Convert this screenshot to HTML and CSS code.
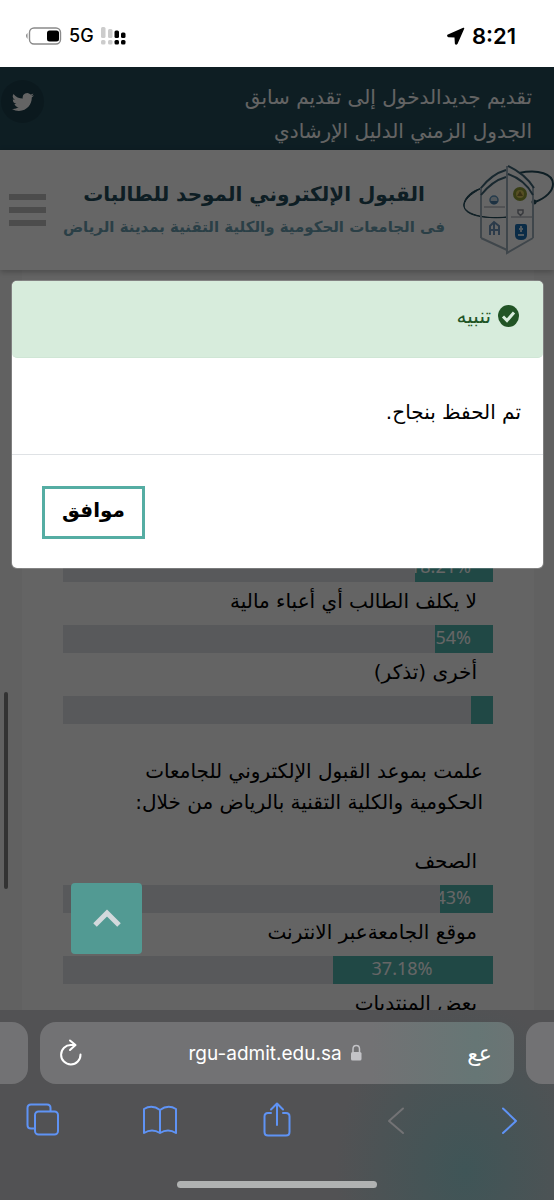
FILE: index.html
```html
<!DOCTYPE html>
<html lang="ar" dir="rtl">
  <head>
    <title>القبول الإلكتروني الموحد للطالبات</title>
    <meta charset="utf-8">
    <meta name="viewport" content="width=device-width, initial-scale=1">
    <link rel="stylesheet" href="styles.css">
  </head>
  <body>

  <!-- phone status bar -->
  <div class="status" dir="ltr">
    <div class="status-group">
      <svg width="38" height="20" viewBox="0 0 38 20">
        <path d="M3.500 7Q.5 9.500 3.500 13Z" fill="#888"/>
        <rect x="5.500" y="2" width="31" height="16" rx="4.500" fill="none" stroke="#8a8a8a" stroke-width="1.400"/>
        <rect x="23" y="4.500" width="12" height="11" rx="2.500" fill="#000"/>
      </svg>
      <span class="network">5G</span>
      <svg width="26" height="20" viewBox="0 0 26 20">
        <g fill="#ccc">
          <rect x="0" y="1" width="4.500" height="11" rx="1.500"/><rect x="7" y="3" width="4.500" height="9" rx="1.500"/>
          <rect x="0" y="14" width="4.500" height="4.500" rx="1.500"/><rect x="7" y="14" width="4.500" height="4.500" rx="1.500"/>
        </g>
        <g fill="#000">
          <rect x="13.500" y="4.500" width="4.500" height="7.500" rx="1.500"/><rect x="20" y="6.500" width="4.500" height="5.500" rx="1.500"/>
          <rect x="13.500" y="14" width="4.500" height="4.500" rx="1.500"/><rect x="20" y="14" width="4.500" height="4.500" rx="1.500"/>
        </g>
      </svg>
    </div>
    <div class="status-group">
      <svg width="18" height="18" viewBox="0 0 18 18"><path d="M16.500 1.500 1.200 8.200q-.8.600.2 1.200l6.800.4.400 6.700q.5 1 1.200.1z" fill="#000" stroke="#000" stroke-width="1.500" stroke-linejoin="round"/></svg>
      <span class="time">8:21</span>
    </div>
  </div>

  <main class="page">
    <div class="topbar">
      <nav class="topbar-links">
        <div><a href="#">تقديم جديد</a><a href="#">الدخول إلى تقديم سابق</a></div>
        <div><a href="#">الجدول الزمني</a> <a href="#">الدليل الإرشادي</a></div>
      </nav>
      <a class="twitter" href="#" aria-label="Twitter">
        <svg width="22" height="22" viewBox="0 0 24 24"><path fill="currentColor" d="M23.950 4.570a10 10 0 0 1-2.820.770 4.960 4.960 0 0 0 2.160-2.720 9.900 9.900 0 0 1-3.120 1.190 4.920 4.920 0 0 0-8.390 4.480A13.940 13.940 0 0 1 1.640 3.160a4.920 4.920 0 0 0 1.520 6.570 4.900 4.900 0 0 1-2.230-.610v.060a4.920 4.920 0 0 0 3.950 4.830 5 5 0 0 1-2.210.080 4.940 4.940 0 0 0 4.600 3.420A9.870 9.870 0 0 1 0 19.540a13.990 13.990 0 0 0 7.550 2.210c9.050 0 14-7.500 14-13.980 0-.210 0-.420-.020-.630a9.940 9.940 0 0 0 2.460-2.550z"/></svg>
      </a>
    </div>

    <header class="header">
      <svg class="logo" width="92" height="92" viewBox="0 0 92 92" fill="none">
        <path d="M20 24C-8 38-6 57 46 53C24 56-1 50 2 39C4 31 12 26 20 24Z" fill="#244c5b" stroke="#244c5b"/>
        <path d="M57 9C77 5 91 10 91 20C91 27 84 34 73 38" stroke="#244c5b" stroke-width="2"/>
        <circle cx="72" cy="38" r="2.500" fill="#244c5b"/>
        <path d="M19 74V23M45 86 19 74M71 74V23M45 2V89L71 74" stroke="#9fb0bc" stroke-width="2"/>
        <path d="M19 24Q30 10 44 6M19 31Q30 17 44 13M46 2Q63 10 72 24M46 10Q63 16 71 31" stroke="#3f6577" stroke-width="2"/>
        <path d="M22 43h21M49 53h21" stroke="#b9bcc2" stroke-width="1.500"/>
        <circle cx="58" cy="30" r="7" fill="#8d9a35"/><circle cx="58" cy="30" r="4" fill="#d8c65a"/><path d="m55 32 3-5 3 5z" fill="#8d7a35"/>
        <circle cx="32" cy="36" r="4" fill="#cddce6" stroke="#5c93bd" stroke-width="1.500"/><path d="M28 37h8l-2 3h-4z" fill="#4a7ba3"/>
        <path d="M56 46h5v3l-2.500 2.500L56 49z" stroke="#8b8f98" stroke-width="1.500"/>
        <path d="M28 71V62l4-4 5 4v9M32 59v12M28 66h9" stroke="#6e93ba" stroke-width="2"/>
        <path d="M53 62q0-2 2-2h8q2 0 2 2v9q0 5-6 5t-6-5z" fill="#1c6fb1"/><path d="M59 62v6M57 65h4M56 71h6" stroke="#c9deee" stroke-width="2"/>
      </svg>
      <div class="brand">
        <h1>القبول الإلكتروني الموحد للطالبات</h1>
        <p>فى الجامعات الحكومية والكلية التقنية بمدينة الرياض</p>
      </div>
      <button class="menu" aria-label="القائمة"><span></span><span></span><span></span></button>
    </header>

    <section class="poll">
      <div class="bar"><div class="fill" style="width: 18.21%">18.21%</div></div>
      <p class="label">لا يكلف الطالب أي أعباء مالية</p>
      <div class="bar"><div class="fill" style="width: 13.54%">13.54%</div></div>
      <p class="label">أخرى (تذكر)</p>
      <div class="bar"><div class="fill" style="width: 4.9%"></div></div>

      <h2 class="question">علمت بموعد القبول الإلكتروني للجامعات الحكومية والكلية التقنية بالرياض من خلال:</h2>
      <p class="label">الصحف</p>
      <div class="bar"><div class="fill" style="width: 12.43%">12.43%</div></div>
      <p class="label">موقع الجامعةعبر الانترنت</p>
      <div class="bar"><div class="fill" style="width: 37.18%">37.18%</div></div>
      <p class="label">بعض المنتديات</p>
    </section>

    <div class="backdrop"></div>
    <div class="scroll-thumb"></div>

    <button class="to-top" aria-label="إلى الأعلى">
      <svg width="30" height="22" viewBox="0 0 30 22"><path d="M3 17 15 5l12 12" fill="none" stroke="#d3d9dc" stroke-width="5"/></svg>
    </button>

    <div class="modal" role="dialog" aria-labelledby="modalTitle">
      <div class="modal-header">
        <svg width="21" height="22" viewBox="0 0 21 22"><ellipse cx="10.500" cy="11" rx="10.500" ry="11" fill="#215425"/><path d="m5 11.500 4 4 7-8" fill="none" stroke="#d7ecdc" stroke-width="3"/></svg>
        <span id="modalTitle">تنبيه</span>
      </div>
      <div class="modal-body">تم الحفظ بنجاح.</div>
      <div class="modal-footer"><button class="ok">موافق</button></div>
    </div>
  </main>

  <!-- browser bar -->
  <footer class="browser" dir="ltr">
    <div class="tabs">
      <div class="tab-edge left"></div>
      <div class="address">
        <button aria-label="Reload">
          <svg width="24" height="28" viewBox="0 0 24 28" fill="none" stroke="#fff" stroke-width="2" stroke-linecap="round" stroke-linejoin="round"><path d="M21.500 15.500A9.700 9.700 0 1 1 12 6h4M11 1.500 16.500 6 11 11"/></svg>
        </button>
        <div class="url">
          <span>rgu-admit.edu.sa</span>
          <svg width="12" height="18" viewBox="0 0 12 18"><rect x="1" y="8" width="10.500" height="8.500" rx="1.500" fill="#c3c3c7"/><path d="M3 8V5q0-3.500 3.250-3.500T9.500 5v3" fill="none" stroke="#c3c3c7" stroke-width="1.500"/></svg>
        </div>
        <button class="reader">عع</button>
      </div>
      <div class="tab-edge right"></div>
    </div>
    <div class="toolbar">
      <button aria-label="Tabs"><svg width="36" height="36" viewBox="0 0 36 36"><path d="M9.500 26.500H6q-3.500 0-3.500-3.500V6Q2.500 2.500 6 2.500h16q3.500 0 3.500 3.500v3"/><rect x="10" y="9.500" width="23" height="23" rx="3.500"/></svg></button>
      <button aria-label="Bookmarks"><svg width="36" height="36" viewBox="0 0 36 36"><path d="M18 8Q10 2 2 7v24q8-5 16 0 8-5 16 0V7q-8-5-16 1v23"/></svg></button>
      <button aria-label="Share"><svg width="36" height="36" viewBox="0 0 36 36"><path d="M12 11H9q-3.500 0-3.500 3.500V30q0 3.500 3.500 3.500h18q3.500 0 3.500-3.500V14.500Q30.500 11 27 11h-3M18 23V2M12 7.500 18 1.500l6 6"/></svg></button>
      <button aria-label="Back" disabled><svg width="36" height="36" viewBox="0 0 36 36"><path d="M27 6.500 13 19l14 12"/></svg></button>
      <button aria-label="Forward"><svg width="36" height="36" viewBox="0 0 36 36"><path d="m10 6.500 13 12.500-13 12"/></svg></button>
    </div>
    <div class="home"></div>
  </footer>

  </body>
</html>
```
FILE: styles.css
```css
* {
  box-sizing: border-box;
}
html {
  height: 100%;
}
body {
  margin: 0;
  height: 100%;
  display: flex;
  flex-direction: column;
  background: #fff;
  color: #000;
  font-family: "DejaVu Sans", sans-serif;
  font-size: 20px;
}
h1, h2, p {
  margin: 0;
  font-weight: normal;
}
a {
  color: inherit;
  text-decoration: none;
}
button {
  margin: 0;
  padding: 0;
  border: 0;
  background: none;
  color: inherit;
  font: inherit;
}
svg {
  display: block;
  flex: none;
}

/* status bar */
.status {
  flex: none;
  display: flex;
  justify-content: space-between;
  height: 67px;
  padding: 4px 38px 0 24px;
  font-family: Inter, sans-serif;
}
.status-group {
  display: flex;
  align-items: center;
  gap: 7px;
}
.network {
  font-size: 18px;
  font-weight: 500;
}
.time {
  font-size: 22px;
  font-weight: 600;
}

/* page */
.page {
  position: relative;
  flex: 1;
  min-height: 0;
  overflow: hidden;
  background: #f3f3f3;
}
.topbar {
  display: flex;
  justify-content: space-between;
  padding: 13px 22px 2px 1px;
  background: #234b58;
  color: #fbfbfb;
  line-height: 34px;
}
.topbar-links {
  white-space: nowrap;
}
.twitter {
  display: flex;
  align-items: center;
  justify-content: center;
  width: 43px;
  height: 43px;
  border-radius: 50%;
  background: #1d3f4b;
}
.header {
  position: relative;
  display: flex;
  align-items: center;
  height: 120px;
  padding-left: 9px;
  background: #fff;
  box-shadow: 0 2px 6px rgba(0,0,0,0.25);
}
.brand {
  flex: 1;
  color: #244c5b;
  text-align: center;
  white-space: nowrap;
}
.brand h1 {
  font-size: 20px;
  font-weight: bold;
  line-height: 34px;
}
.brand p {
  color: #6a9db0;
  font-size: 15px;
  font-weight: bold;
  line-height: 32px;
}
.menu {
  display: flex;
  flex-direction: column;
  gap: 7px;
  width: 37px;
}
.menu span {
  height: 6px;
  background: #bfbfbf;
}

.poll {
  margin: 0 20px 0 22px;
  padding: 284px 41px 0;
  background: #f9f9f9;
}
.bar {
  height: 28px;
  background: #dcdee4;
}
.fill {
  height: 100%;
  padding-right: 22px;
  overflow: hidden;
  background: #51b3ad;
  color: #fff;
  font-family: "Noto Sans", sans-serif;
  font-size: 18px;
  line-height: 25px;
  text-align: center;
}
.label {
  padding: 0 16px 4px 0;
  line-height: 39px;
}
.question {
  margin: 32px 0 24px;
  padding: 0 10px 0 30px;
  font-size: 20px;
  line-height: 31px;
}

.backdrop {
  position: absolute;
  inset: 0;
  background: rgba(0,0,0,0.6);
}
.scroll-thumb {
  position: absolute;
  left: 4px;
  top: 625px;
  width: 4px;
  height: 197px;
  border-radius: 2px;
  background: #333;
}
.to-top {
  position: absolute;
  left: 71px;
  bottom: 56px;
  display: flex;
  align-items: center;
  justify-content: center;
  width: 71px;
  height: 71px;
  border-radius: 4px;
  background: #529a93;
}

.modal {
  position: absolute;
  top: 214px;
  left: 12px;
  right: 11px;
  border-radius: 5px;
  background: #fff;
  box-shadow: 0 0 0 1px rgba(255,255,255,0.2);
}
.modal-header {
  display: flex;
  align-items: flex-start;
  gap: 7px;
  height: 77px;
  padding: 24px;
  border-bottom: 1px solid #cfe6d5;
  border-radius: 5px;
  background: #d7ecdc;
  color: #215425;
  line-height: 22px;
}
.modal-body {
  padding: 42px 22px 29px;
  line-height: 25px;
}
.modal-footer {
  display: flex;
  justify-content: flex-end;
  padding: 31px 30px 29px;
  border-top: 1px solid #dfe2e5;
}
.ok {
  width: 103px;
  height: 53px;
  padding-bottom: 5px;
  border: 3px solid #55ada3;
  font-weight: bold;
}

/* browser bar */
.browser {
  flex: none;
  height: 190px;
  padding-top: 12px;
  background: radial-gradient(ellipse 130px 170px at 84% 85%, #3f5557, rgba(82,82,84,0)), #525254;
  color: #fff;
}
.tabs {
  display: flex;
  gap: 12px;
  height: 62px;
}
.tab-edge {
  width: 28px;
  background: #727274;
}
.left {
  border-radius: 0 16px 16px 0;
}
.right {
  border-radius: 16px 0 0 16px;
}
.address {
  flex: 1;
  display: flex;
  align-items: center;
  justify-content: space-between;
  padding: 0 22px 0 19px;
  border-radius: 16px;
  background: linear-gradient(90deg, #727274 70%, #667675 92%, #6b7474);
}
.url {
  display: flex;
  align-items: center;
  gap: 8px;
  font-family: Inter, sans-serif;
  font-size: 19px;
}
.reader {
  font-size: 22px;
}
.toolbar {
  display: flex;
  justify-content: space-between;
  padding: 18px 25px 0;
}
.toolbar svg {
  fill: none;
  stroke: #5f93f5;
  stroke-width: 2;
  stroke-linecap: round;
  stroke-linejoin: round;
}
.toolbar button:disabled svg {
  stroke: #737375;
}
.home {
  width: 36%;
  height: 7px;
  margin: 43px auto 0;
  border-radius: 4px;
  background: #b0b2b2;
}
```
